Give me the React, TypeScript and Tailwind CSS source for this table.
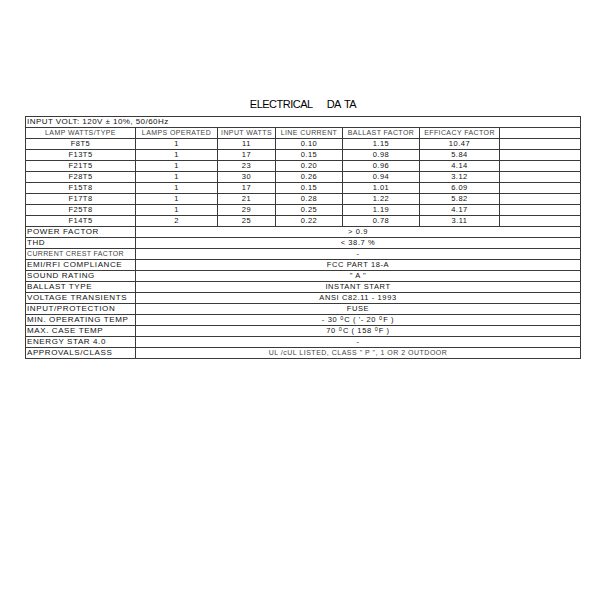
import React from "react";

const rows = [
  ["F8T5", "1", "11", "0.10", "1.15", "10.47"],
  ["F13T5", "1", "17", "0.15", "0.98", "5.84"],
  ["F21T5", "1", "23", "0.20", "0.96", "4.14"],
  ["F28T5", "1", "30", "0.26", "0.94", "3.12"],
  ["F15T8", "1", "17", "0.15", "1.01", "6.09"],
  ["F17T8", "1", "21", "0.28", "1.22", "5.82"],
  ["F25T8", "1", "29", "0.25", "1.19", "4.17"],
  ["F14T5", "2", "25", "0.22", "0.78", "3.11"],
];

const widths = ["w-[110px]", "w-[82px]", "w-[58px]", "w-[67px]", "w-[77px]", "w-[80px]"];
const headers = ["LAMP WATTS/TYPE", "LAMPS OPERATED", "INPUT WATTS", "LINE CURRENT", "BALLAST FACTOR", "EFFICACY FACTOR"];

const Deg = () => <sup className="text-[5.5px] top-[-0.35em] ml-[3px] mr-[1px] tracking-normal">0</sup>;

const specs: { label: React.ReactNode; value: React.ReactNode; labelGray?: boolean; valueGray?: boolean }[] = [
  { label: "POWER FACTOR", value: "> 0.9" },
  { label: "THD", value: "< 38.7 %" },
  { label: "CURRENT CREST FACTOR", value: "-", labelGray: true },
  { label: "EMI/RFI COMPLIANCE", value: "FCC PART 18-A" },
  { label: "SOUND RATING", value: "\" A \"" },
  { label: "BALLAST TYPE", value: "INSTANT START" },
  { label: "VOLTAGE TRANSIENTS", value: "ANSI C82.11 - 1993" },
  { label: "INPUT/PROTECTION", value: "FUSE" },
  {
    label: "MIN. OPERATING TEMP",
    value: (
      <>
        - 30<Deg />C ( '- 20<Deg />F )
      </>
    ),
  },
  {
    label: "MAX. CASE TEMP",
    value: (
      <>
        70<Deg />C ( 158<Deg />F )
      </>
    ),
  },
  { label: "ENERGY STAR 4.0", value: "-" },
  { label: "APPROVALS/CLASS", value: "UL /cUL LISTED, CLASS \" P \", 1 OR 2 OUTDOOR", valueGray: true },
];

export default function App() {
  return (
    <div className="w-[600px] h-[600px] bg-white text-[#111]" style={{ fontFamily: '"Liberation Sans", Arial, sans-serif' }}>
      <div className="pt-[97px] h-[116px] flex justify-center">
        <div className="ml-[6px] text-[11px] leading-[14px] tracking-[-0.5px] text-black">
          ELECTRICAL<span className="ml-[14px]">DA</span>
          <span className="ml-[3px]">TA</span>
        </div>
      </div>
      <div className="ml-[25px] w-[556px] border-t border-l border-r border-[#3a3a3a]">
        <div className="h-[11px] flex items-center border-b border-[#3a3a3a] pl-[1px] text-[8px] tracking-[0.45px] leading-[10px]">
          INPUT VOLT: 120V ± 10%, 50/60Hz
        </div>
        <div className="h-[11px] flex border-b border-[#3a3a3a]">
          {headers.map((h, i) => (
            <div
              key={h}
              className={`${widths[i]} shrink-0 border-r border-[#3a3a3a] flex items-center justify-center text-[7px] tracking-[0.4px] leading-[10px] text-[#444]`}
            >
              {h}
            </div>
          ))}
          <div className="flex-1" />
        </div>
        {rows.map((r) => (
          <div key={r[0]} className="h-[11px] flex border-b border-[#3a3a3a]">
            {r.map((c, i) => (
              <div
                key={i}
                className={`${widths[i]} shrink-0 border-r border-[#3a3a3a] flex items-center justify-center text-[7.5px] tracking-[0.5px] leading-[10px]`}
              >
                {c}
              </div>
            ))}
            <div className="flex-1" />
          </div>
        ))}
        {specs.map((s, idx) => (
          <div key={idx} className="h-[11px] flex border-b border-[#3a3a3a]">
            <div
              className={`w-[110px] shrink-0 border-r border-[#3a3a3a] flex items-center pl-[1px] leading-[10px] whitespace-nowrap ${
                s.labelGray ? "text-[7px] tracking-[0.35px] text-[#444]" : "text-[8px] tracking-[0.6px]"
              }`}
            >
              {s.label}
            </div>
            <div
              className={`flex-1 flex items-center justify-center leading-[10px] whitespace-nowrap ${
                s.valueGray ? "text-[7px] tracking-[0.5px] text-[#444]" : "text-[7.5px] tracking-[0.6px]"
              }`}
            >
              {s.value}
            </div>
          </div>
        ))}
      </div>
    </div>
  );
}
